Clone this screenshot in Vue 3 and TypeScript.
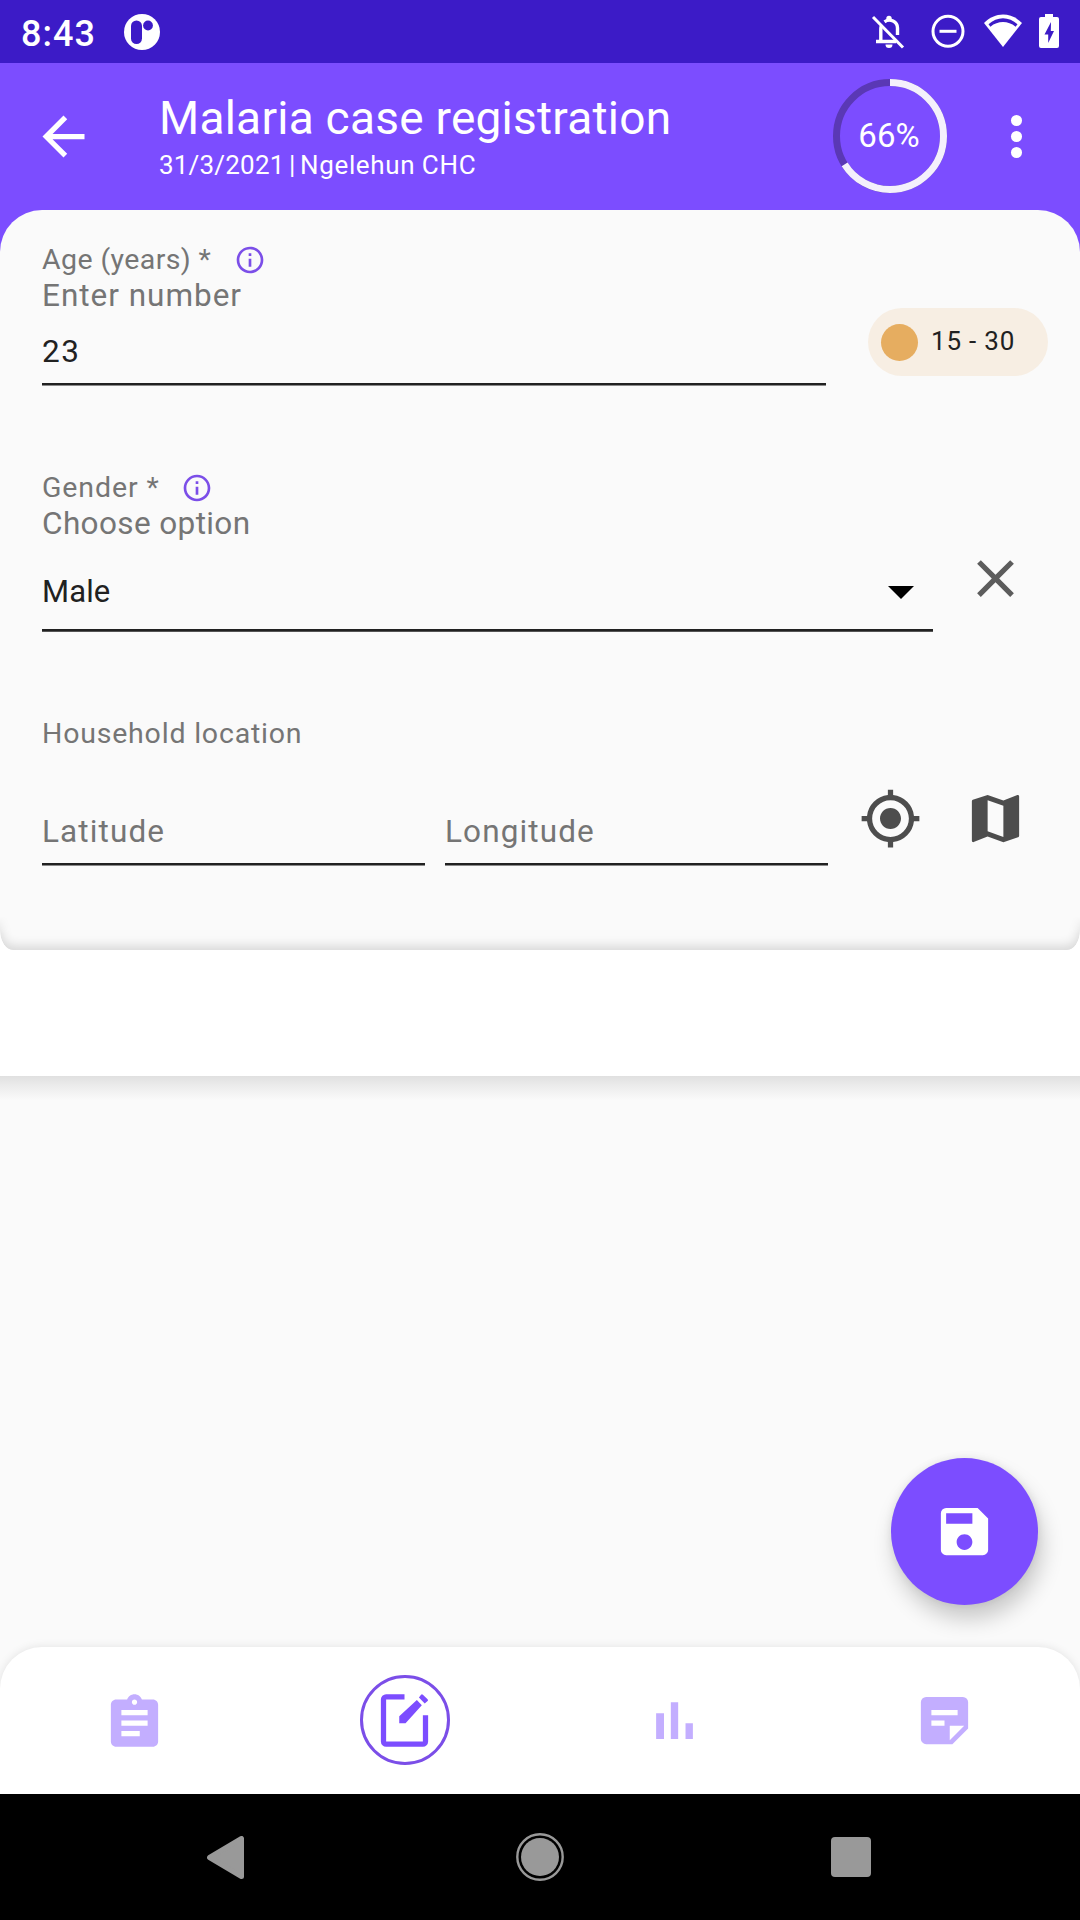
<script setup lang="ts">
import { ref } from 'vue'

const age = ref('23')
const gender = ref('Male')
const progress = 66
const ring = 2 * Math.PI * 53.5
</script>

<template>
  <div class="screen">
    <header class="status">
      <span class="clock">8:43</span>
      <svg class="logo" viewBox="0 0 36 36">
        <circle cx="18" cy="18" r="18" fill="#fff" />
        <rect x="7" y="6.500" width="11" height="23.500" rx="5.500" fill="#3c1bc7" />
        <circle cx="24" cy="11.500" r="4.900" fill="#3c1bc7" />
      </svg>
      <div class="status-icons">
        <svg class="bell" viewBox="0 0 34 36" fill="none" stroke="#fff">
          <path d="M2 3 32 33.500" stroke-width="3" />
          <path d="M5 27.500H25M9.800 28V15q0-1.500.6-3M13.500 7.800C19 4 26.500 7.500 26.500 14V21" stroke-width="3.400" />
          <circle cx="18" cy="4.500" r="2.700" fill="#fff" stroke="none" />
          <path d="M14.500 30.500h7a3.500 3.500 0 0 1-7 0z" fill="#fff" stroke="none" />
        </svg>
        <svg class="dnd" viewBox="0 0 34 34" fill="none" stroke="#fff" stroke-width="3">
          <circle cx="17" cy="17.300" r="15" />
          <path d="M8.500 17.300h17" />
        </svg>
        <svg class="wifi" viewBox="0 0 40 34">
          <path d="M20 33 1 9C12-2.500 28-2.500 39 9z" fill="#fff" />
          <path d="M5.500 10.200C14 2.200 26 2.200 34.500 10.200L32.600 12.700C25 6.500 15 6.500 7.400 12.700z" fill="#3c1bc7" />
        </svg>
        <svg class="battery" viewBox="0 0 20 34">
          <path d="M6 0h8v3h4a2 2 0 0 1 2 2v27a2 2 0 0 1-2 2H2a2 2 0 0 1-2-2V5a2 2 0 0 1 2-2h4z" fill="#fff" />
          <path d="M12 8 5.500 20.500H9.200V29L15 17H11.800z" fill="#3c1bc7" />
        </svg>
      </div>
    </header>

    <div class="appbar">
      <svg class="icon back" viewBox="0 0 24 24" fill="#fff">
        <path d="M20 11H7.830l5.590-5.590L12 4l-8 8 8 8 1.410-1.410L7.830 13H20v-2z" />
      </svg>
      <div class="titles">
        <h1>Malaria case registration</h1>
        <p>31/3/2021 | <span>Ngelehun CHC</span></p>
      </div>
      <div class="progress">
        <svg viewBox="0 0 114 114" fill="none" stroke-width="7">
          <circle cx="57" cy="57" r="53.500" stroke="#5a38b5" />
          <circle
            cx="57" cy="57" r="53.500" stroke="#f4f0fc"
            :stroke-dasharray="`${(ring * progress) / 100} ${ring}`"
            transform="rotate(-90 57 57)"
          />
        </svg>
        <span>{{ progress }}%</span>
      </div>
      <svg class="icon more" viewBox="0 0 24 24" fill="#fff">
        <circle cx="12" cy="5.900" r="2.100" /><circle cx="12" cy="12" r="2.100" /><circle cx="12" cy="18.100" r="2.100" />
      </svg>
    </div>

    <div class="card-wrap">
      <main class="card">
        <section class="field age">
          <div class="label">
            <span class="label-age">Age (years) *</span>
            <svg class="info" viewBox="0 0 24 24" fill="#7b4ee8">
              <path d="M11 7h2v2h-2zm0 4h2v6h-2zm1-9C6.480 2 2 6.480 2 12s4.480 10 10 10 10-4.480 10-10S17.520 2 12 2zm0 18c-4.410 0-8-3.590-8-8s3.590-8 8-8 8 3.590 8 8-3.590 8-8 8z" />
            </svg>
          </div>
          <div class="hint hint-number">Enter number</div>
          <div class="row">
            <div class="value number">{{ age }}</div>
            <div class="chip"><i></i><span>15 - 30</span></div>
          </div>
        </section>

        <section class="field gender">
          <div class="label">
            <span class="label-gender">Gender *</span>
            <svg class="info" viewBox="0 0 24 24" fill="#7b4ee8">
              <path d="M11 7h2v2h-2zm0 4h2v6h-2zm1-9C6.480 2 2 6.480 2 12s4.480 10 10 10 10-4.480 10-10S17.520 2 12 2zm0 18c-4.410 0-8-3.590-8-8s3.590-8 8-8 8 3.590 8 8-3.590 8-8 8z" />
            </svg>
          </div>
          <div class="hint hint-option">Choose option</div>
          <div class="row">
            <div class="value select">
              <span>{{ gender }}</span>
              <svg class="caret" viewBox="0 0 26 13"><path d="M0 0h26L13 13z" /></svg>
            </div>
            <svg class="icon clear" viewBox="0 0 24 24" fill="#5c5c5c">
              <path d="M19 6.410 17.590 5 12 10.590 6.410 5 5 6.410 10.590 12 5 17.590 6.410 19 12 13.410 17.590 19 19 17.590 13.410 12z" />
            </svg>
          </div>
        </section>

        <section class="field location">
          <div class="label"><span class="label-house">Household location</span></div>
          <div class="row">
            <div class="value coord lat">Latitude</div>
            <div class="value coord lng">Longitude</div>
            <svg class="icon gps" viewBox="0 0 24 24" fill="#4d4d4d">
              <path d="M12 8c-2.210 0-4 1.790-4 4s1.790 4 4 4 4-1.790 4-4-1.790-4-4-4zm8.940 3A8.994 8.994 0 0 0 13 3.060V1h-2v2.060A8.994 8.994 0 0 0 3.060 11H1v2h2.060A8.994 8.994 0 0 0 11 20.940V23h2v-2.060A8.994 8.994 0 0 0 20.940 13H23v-2h-2.060zM12 19c-3.870 0-7-3.130-7-7s3.130-7 7-7 7 3.130 7 7-3.130 7-7 7z" />
            </svg>
            <svg class="icon map" viewBox="0 0 24 24" fill="#4d4d4d">
              <path d="M20.500 3l-.16.03L15 5.100 9 3 3.360 4.900c-.21.07-.36.25-.36.48V20.500c0 .28.22.5.5.5l.16-.03L9 18.900l6 2.100 5.640-1.900c.21-.07.36-.25.36-.48V3.500c0-.28-.22-.5-.5-.5zM15 19l-6-2.110V5l6 2.110V19z" />
            </svg>
          </div>
        </section>
      </main>
    </div>
    <div class="strip"></div>

    <div class="body">
      <button class="fab" type="button">
        <svg class="icon" viewBox="0 0 24 24" fill="#fff">
          <path d="M17 3H5a2 2 0 0 0-2 2v14a2 2 0 0 0 2 2h14a2 2 0 0 0 2-2V7l-4-4zm-5 16c-1.660 0-3-1.340-3-3s1.340-3 3-3 3 1.340 3 3-1.340 3-3 3zm3-10H5V5h10v4z" />
        </svg>
      </button>
    </div>

    <nav class="tabs">
      <div class="tab">
        <svg class="icon" viewBox="0 0 24 24" fill="#c3aeff">
          <path d="M19 4h-4.180C14.400 2.840 13.300 2 12 2s-2.400.84-2.820 2H5c-1.100 0-2 .9-2 2v14c0 1.100.9 2 2 2h14c1.100 0 2-.9 2-2V6c0-1.100-.9-2-2-2zm-7 0c.55 0 1 .45 1 1s-.45 1-1 1-1-.45-1-1 .45-1 1-1zm2 14H7v-2h7v2zm3-4H7v-2h10v2zm0-4H7V8h10v2z" />
        </svg>
      </div>
      <div class="tab active">
        <div class="selected">
          <svg class="icon" viewBox="0 0 24 24" fill="#7c4dff">
            <path d="M12 2v2H5v16h14V10h2v10a2 2 0 0 1-2 2H5a2 2 0 0 1-2-2V4a2 2 0 0 1 2-2z" />
            <path d="M16.700 4.150 18.600 6.150 12.400 13H10V10.400zM18.300 2.150a.5.500 0 0 1 .7 0L20.800 3.900a.5.500 0 0 1 0 .7L19.700 5.500 17.500 3.200z" />
          </svg>
        </div>
      </div>
      <div class="tab">
        <svg class="icon" viewBox="0 0 24 24" fill="#c3aeff">
          <path d="M5 9.200h3V19H5zM10.600 5h2.800v14h-2.800zM16.200 13H19v6h-2.800z" />
        </svg>
      </div>
      <div class="tab">
        <svg class="icon" viewBox="0 0 24 24" fill="#c3aeff" fill-rule="evenodd">
          <path d="M5 3h14a2 2 0 0 1 2 2v10l-6 6H5a2 2 0 0 1-2-2V5a2 2 0 0 1 2-2zM7 8v2h10V8zM7 12v2h5v-2zM14 19.500 19.500 14H14z" />
        </svg>
      </div>
    </nav>

    <footer class="sysnav">
      <svg class="sys-back" viewBox="0 0 38 43"><path d="M34.500 2.500v38L2.500 21.500z" fill="#999" stroke="#999" stroke-width="5" stroke-linejoin="round" /></svg>
      <svg class="sys-home" viewBox="0 0 48 48">
        <circle cx="24" cy="24" r="22.700" fill="none" stroke="#999" stroke-width="2.400" />
        <circle cx="24" cy="24" r="19" fill="#999" />
      </svg>
      <i class="sys-recent"></i>
    </footer>
  </div>
</template>

<style>
body {
  margin: 0;
}
</style>

<style scoped>
.screen {
  width: 1080px;
  height: 1920px;
  display: flex;
  flex-direction: column;
  overflow: hidden;
  background: #fafafa;
  font-family: Roboto, "Liberation Sans", sans-serif;
  color: #212121;
}
.screen * {
  box-sizing: border-box;
}
svg {
  display: block;
  flex: none;
}
.icon {
  width: 63px;
  height: 63px;
}
.status {
  height: 63px;
  flex: none;
  display: flex;
  background: #3c1bc7;
  color: #fff;
}
.clock {
  width: 102px;
  margin-left: 21px;
  font-size: 36px;
  font-weight: 500;
  line-height: 69px;
  letter-spacing: 1px;
}
.logo {
  width: 36px;
  height: 36px;
  margin: 14px 0 0 1px;
}
.status-icons {
  margin-left: auto;
  display: flex;
}
.bell {
  width: 34px;
  height: 36px;
  margin: 14px 0 0;
}
.dnd {
  width: 34px;
  height: 34px;
  margin: 14px 0 0 26px;
}
.wifi {
  width: 40px;
  height: 34px;
  margin: 14px 0 0 18px;
}
.battery {
  width: 20px;
  height: 34px;
  margin: 14px 21px 0 16px;
}
.appbar {
  height: 147px;
  flex: none;
  display: flex;
  background: #7c4dff;
  color: #fff;
}
.back {
  margin: 42px 0 0 32px;
}
.titles {
  width: 672px;
  padding: 27px 0 0 64px;
}
h1 {
  margin: 0;
  font-size: 46px;
  font-weight: 400;
  line-height: 56px;
  letter-spacing: 0.25px;
  white-space: nowrap;
}
p {
  margin: 0;
  font-size: 26px;
  line-height: 38px;
  letter-spacing: 0.2px;
  word-spacing: -2.2px;
  white-space: nowrap;
}
p span {
  letter-spacing: 0.65px;
  word-spacing: -0.5px;
}
.progress {
  width: 114px;
  height: 114px;
  margin: 16px 0 0 66px;
  display: grid;
}
.progress > * {
  grid-area: 1 / 1;
}
.progress span {
  padding-right: 2px;
  font-size: 33px;
  line-height: 114px;
  text-align: center;
}
.more {
  margin: 42px 0 0 38px;
}
.card-wrap {
  height: 740px;
  flex: none;
  background: linear-gradient(#7c4dff 60px, #fff 60px);
}
.card {
  position: relative;
  height: 740px;
  padding-left: 42px;
  border-radius: 42px 42px 13px 13px / 42px 42px 20px 20px;
  background: #fafafa;
}
/* soft shade along the lower edge of the card */
.card::after {
  content: "";
  position: absolute;
  left: 0;
  right: 0;
  bottom: 0;
  height: 42px;
  border-radius: 0 0 13px 13px / 0 0 20px 20px;
  box-shadow: inset 0 -4px 11px rgba(0, 0, 0, 0.14);
  -webkit-mask-image: linear-gradient(transparent 8px, #000 26px);
  mask-image: linear-gradient(transparent 8px, #000 26px);
}
.label {
  height: 37px;
  display: flex;
  align-items: center;
  font-size: 28.5px;
  line-height: 38px;
  color: #757575;
  white-space: nowrap;
}
.label-age {
  width: 192px;
  letter-spacing: 0.4px;
}
.label-gender {
  width: 139px;
  letter-spacing: 0.9px;
}
.label-house {
  letter-spacing: 0.8px;
}
.info {
  width: 32px;
  height: 32px;
}
.hint {
  height: 35px;
  font-size: 31.5px;
  line-height: 35px;
  color: #757575;
}
.hint-number {
  letter-spacing: 0.98px;
}
.hint-option {
  letter-spacing: 0.38px;
}
.row {
  display: flex;
}
.value {
  font-size: 31.5px;
  border-bottom: 2px solid #212121;
  box-shadow: 0 1px #8a8a8a;
}
.age {
  height: 228px;
  padding-top: 31px;
}
.number {
  width: 784px;
  height: 72px;
  line-height: 77px;
  letter-spacing: 1.5px;
}
.chip {
  width: 180px;
  height: 68px;
  margin: -5px 0 0 42px;
  padding-left: 13px;
  display: flex;
  align-items: center;
  border-radius: 34px;
  background: #f7eee3;
  font-size: 26px;
  letter-spacing: 0.8px;
}
.chip i {
  width: 37px;
  height: 37px;
  margin-right: 13px;
  border-radius: 50%;
  background: #e6ad60;
}
.chip span {
  padding-bottom: 2px;
}
.gender {
  height: 276px;
  padding-top: 31px;
}
.select {
  width: 891px;
  height: 90px;
  padding-right: 19px;
  display: flex;
  justify-content: space-between;
  line-height: 101px;
  font-size: 31px;
  letter-spacing: 0.1px;
  box-shadow: 0 1px #555;
}
.caret {
  width: 26px;
  height: 13px;
  margin-top: 45px;
}
.clear {
  margin: 6px 0 0 31px;
}
.location {
  padding-top: 1px;
}
.location .row {
  margin-top: 35px;
}
.coord {
  width: 383px;
  height: 78px;
  line-height: 89px;
  letter-spacing: 1.12px;
  color: #757575;
}
.lng {
  margin-left: 20px;
}
.gps {
  margin-left: 31px;
}
.map {
  margin-left: 42px;
}
.strip {
  height: 126px;
  flex: none;
  background: #fff;
}
.body {
  height: 571px;
  flex: none;
  padding: 382px 42px 0 0;
  background: linear-gradient(#e0e0e0, #ebebeb 9px, #fafafa 24px);
}
.fab {
  width: 147px;
  height: 147px;
  margin-left: auto;
  padding: 0;
  border: 0;
  display: grid;
  place-items: center;
  border-radius: 50%;
  background: #7c4dff;
  box-shadow: 4px 14px 22px rgba(0, 0, 0, 0.2), 0 0 8px rgba(0, 0, 0, 0.08);
}
.tabs {
  height: 147px;
  flex: none;
  display: flex;
  border-radius: 42px 42px 0 0;
  background: #fff;
  box-shadow: 0 0 10px rgba(0, 0, 0, 0.1);
}
.tab {
  flex: 1;
  padding: 0 1px 1px 0;
  display: grid;
  place-items: center;
}
.tab.active {
  padding: 0 0 1px;
}
.selected {
  width: 90px;
  height: 90px;
  display: grid;
  place-items: center;
  border: 3px solid #7b4ee8;
  border-radius: 50%;
}
.selected .icon {
  margin-right: 1px;
}
.sysnav {
  height: 126px;
  flex: none;
  display: flex;
  align-items: center;
  background: #000;
}
.sys-back {
  width: 38px;
  height: 43px;
  margin-left: 207px;
}
.sys-home {
  width: 48px;
  height: 48px;
  margin-left: 271px;
}
.sys-recent {
  width: 40px;
  height: 40px;
  margin-left: 267px;
  border-radius: 4px;
  background: #999;
}
</style>
